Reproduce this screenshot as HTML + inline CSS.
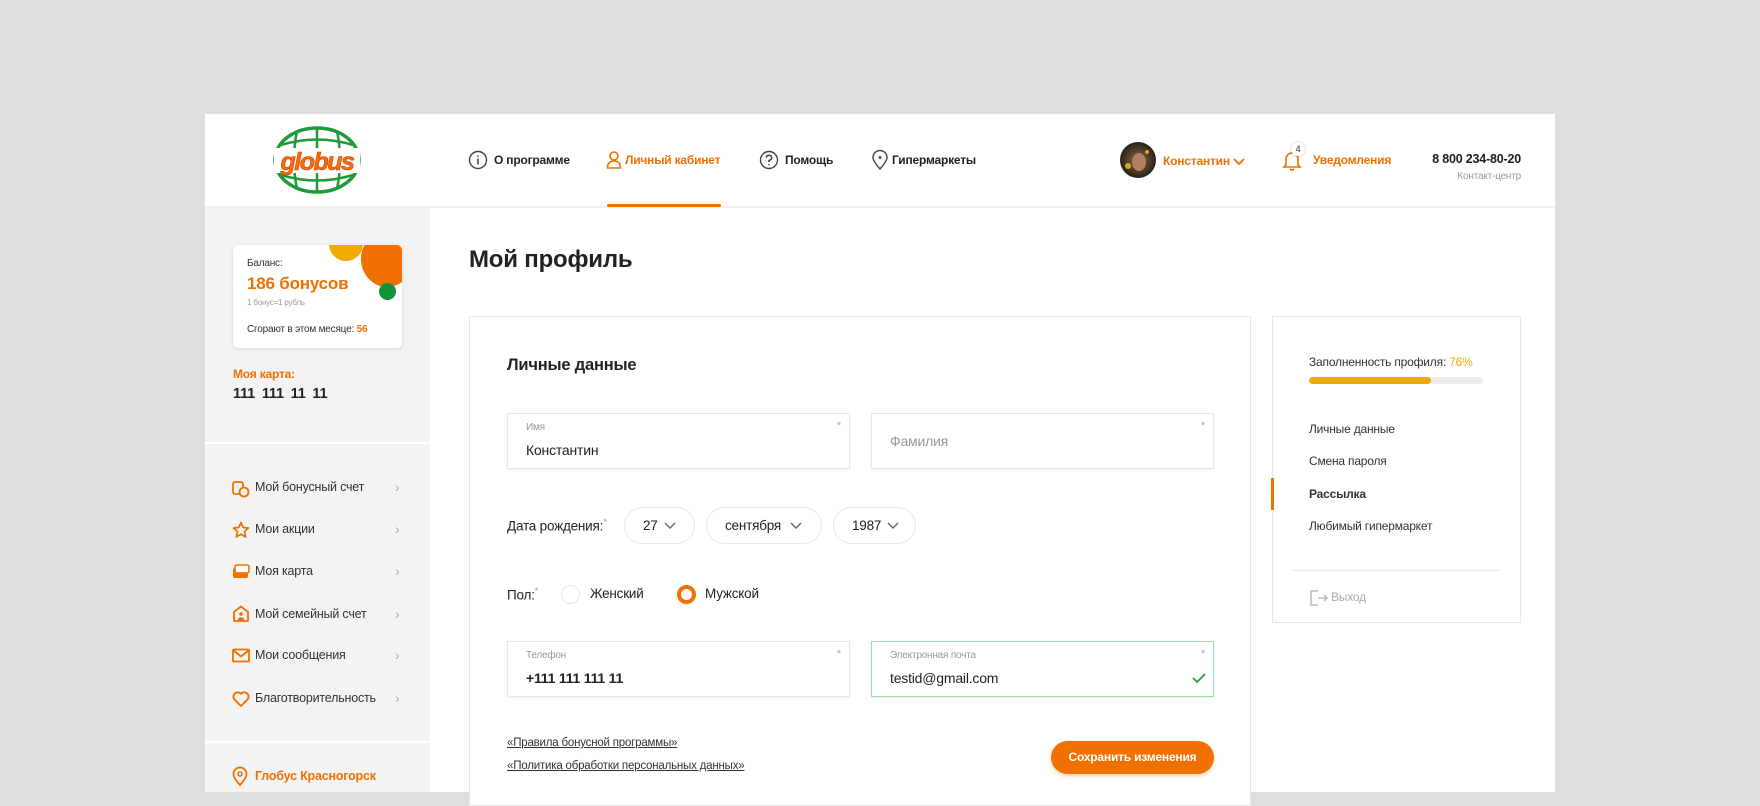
<!DOCTYPE html>
<html><head><meta charset="utf-8">
<style>
*{margin:0;padding:0;box-sizing:border-box}
body{width:1760px;height:792px;background:#dedede;position:relative;overflow:hidden;font-family:"Liberation Sans",sans-serif;color:#222;letter-spacing:-0.2px}
.a{position:absolute;white-space:nowrap}
.or{color:#f07000}
.b{font-weight:bold}
svg{position:absolute;overflow:visible}
.inp{position:absolute;background:#fff;border:1px solid #e6e6e6;box-shadow:0 1px 3px rgba(0,0,0,.06)}
.lbl{position:absolute;left:18px;top:8px;font-size:10px;color:#999}
.val{position:absolute;left:18px;top:28px;font-size:14px;color:#222}
.star{position:absolute;right:8px;top:6px;font-size:11px;color:#aaa}
.pill{position:absolute;top:507px;height:37px;border:1px solid #e8e8e8;border-radius:19px;background:#fff;font-size:13.5px;padding:10px 0 0 18px}
.mi{position:absolute;left:255px;font-size:12.5px;color:#333}
.ch{position:absolute;left:395px;font-size:14px;color:#aaa}
.ri{position:absolute;left:1309px;font-size:12px;color:#333}
</style></head><body>
<div class="a" style="left:205px;top:114px;width:1350px;height:678px;background:#fff"></div>
<div class="a" style="left:205px;top:206px;width:1350px;height:2px;background:#f0f0f0"></div>
<div class="a" style="left:205px;top:208px;width:225px;height:584px;background:#f3f3f3"></div>

<!-- logo -->
<svg style="left:272px;top:126px" width="90" height="68" viewBox="0 0 90 68">
<ellipse cx="45" cy="34" rx="42" ry="32" fill="#fff" stroke="#1f9a3a" stroke-width="3.5"/>
<path d="M9 19 Q45 8 81 19 M9 49 Q45 60 81 49 M25 5 Q19 34 25 63 M45 2 V66 M65 5 Q71 34 65 63" stroke="#1f9a3a" stroke-width="2.5" fill="none"/>
<rect x="2" y="22" width="86" height="25" fill="#fff"/>
<text x="45" y="44" text-anchor="middle" font-family="Liberation Sans" font-weight="bold" font-style="italic" font-size="25" fill="#f07000" stroke="#d23a10" stroke-width="0.6" letter-spacing="-1.5">globus</text>
</svg>

<!-- nav -->
<svg style="left:468px;top:150px" width="20" height="20"><circle cx="10" cy="10" r="8.5" fill="none" stroke="#444" stroke-width="1.4"/><path d="M10 8.5V14.5M10 5.5V6.8" stroke="#444" stroke-width="1.6"/></svg>
<div class="a b" style="left:494px;top:153px;font-size:12px">О программе</div>
<svg style="left:606px;top:150px" width="16" height="20"><circle cx="8" cy="6" r="4" fill="none" stroke="#f07000" stroke-width="1.6"/><path d="M1.5 18Q1.5 11 8 11T14.5 18Z" fill="none" stroke="#f07000" stroke-width="1.6"/></svg>
<div class="a b or" style="left:625px;top:153px;font-size:12px">Личный кабинет</div>
<div class="a" style="left:607px;top:204px;width:114px;height:3px;background:#f07000;border-radius:2px"></div>
<svg style="left:759px;top:150px" width="20" height="20"><circle cx="10" cy="10" r="8.5" fill="none" stroke="#444" stroke-width="1.4"/><path d="M7.3 7.8Q7.5 5.3 10 5.3T12.7 7.8Q12.7 9.5 10 10.5V12M10 14V15.3" fill="none" stroke="#444" stroke-width="1.5"/></svg>
<div class="a b" style="left:785px;top:153px;font-size:12px">Помощь</div>
<svg style="left:871px;top:149px" width="18" height="22"><path d="M9 20Q2 12 2 8.5A7 7 0 0 1 16 8.5Q16 12 9 20Z" fill="none" stroke="#444" stroke-width="1.4"/><circle cx="9" cy="8.5" r="1.4" fill="#444"/></svg>
<div class="a b" style="left:892px;top:153px;font-size:12px">Гипермаркеты</div>

<!-- user -->
<svg style="left:1120px;top:142px" width="36" height="36"><defs><radialGradient id="g"><stop offset="0" stop-color="#8a6a40"/><stop offset="1" stop-color="#2a2018"/></radialGradient></defs><circle cx="18" cy="18" r="18" fill="url(#g)"/><circle cx="8" cy="24" r="3" fill="#e0a020"/><circle cx="27" cy="10" r="2" fill="#e0a020"/><ellipse cx="19" cy="20" rx="7" ry="9" fill="#b08060"/></svg>
<div class="a b or" style="left:1163px;top:154px;font-size:12px">Константин</div>
<svg style="left:1233px;top:158px" width="12" height="8"><path d="M1 1L6 6L11 1" fill="none" stroke="#f07000" stroke-width="1.8"/></svg>
<svg style="left:1283px;top:150px" width="18" height="22"><path d="M3 15V9A6 6 0 0 1 15 9V15L17 17H1Z M7 19Q9 21 11 19" fill="none" stroke="#f07000" stroke-width="1.6"/></svg>
<div class="a" style="left:1291px;top:142px;width:14px;height:14px;border-radius:7px;background:#fff;box-shadow:0 0 2px rgba(0,0,0,.3);font-size:9px;text-align:center;line-height:14px;color:#333">4</div>
<div class="a b or" style="left:1313px;top:153px;font-size:12px">Уведомления</div>
<div class="a b" style="left:1400px;top:152px;width:121px;text-align:right;font-size:12.5px">8 800 234-80-20</div>
<div class="a" style="left:1400px;top:171px;width:121px;text-align:right;font-size:10px;color:#999">Контакт-центр</div>

<!-- balance card -->
<div class="a" style="left:233px;top:245px;width:169px;height:103px;background:#fff;border-radius:5px;box-shadow:0 1px 4px rgba(0,0,0,.12);overflow:hidden">
<div class="a" style="left:96px;top:-18px;width:34px;height:34px;border-radius:50%;background:#f2a900"></div>
<div class="a" style="left:128px;top:-14px;width:52px;height:56px;border-radius:50%;background:#f07000"></div>
<div class="a" style="left:146px;top:38px;width:17px;height:17px;border-radius:50%;background:#12923a"></div>
</div>
<div class="a" style="left:247px;top:258px;font-size:10px;color:#333">Баланс:</div>
<div class="a b or" style="left:247px;top:274px;font-size:17px">186 бонусов</div>
<div class="a" style="left:247px;top:298px;font-size:8px;color:#999">1 бонус=1 рубль</div>
<div class="a" style="left:247px;top:324px;font-size:10px;color:#333">Сгорают в этом месяце: <b class="or">56</b></div>
<div class="a b or" style="left:233px;top:367px;font-size:12px">Моя карта:</div>
<div class="a b" style="left:233px;top:386px;font-size:14.5px;word-spacing:3px">111 111 11 11</div>
<div class="a" style="left:205px;top:442px;width:225px;height:2px;background:#fff"></div>

<!-- menu -->
<svg style="left:232px;top:480px" width="18" height="18"><rect x="1" y="2" width="10" height="12" rx="2" fill="none" stroke="#f07000" stroke-width="1.8"/><circle cx="12" cy="12" r="4.5" fill="#f3f3f3" stroke="#f07000" stroke-width="1.8"/></svg>
<div class="mi" style="top:480px">Мой бонусный счет</div><div class="ch" style="top:479px">›</div>
<svg style="left:232px;top:521px" width="18" height="18"><path d="M9 1.5L11.2 6.5L16.5 7L12.5 10.5L13.7 16L9 13.2L4.3 16L5.5 10.5L1.5 7L6.8 6.5Z" fill="none" stroke="#f07000" stroke-width="1.7" stroke-linejoin="round"/></svg>
<div class="mi" style="top:522px">Мои акции</div><div class="ch" style="top:521px">›</div>
<svg style="left:232px;top:564px" width="18" height="16"><rect x="1" y="4" width="15" height="10" rx="2" fill="#f07000"/><rect x="3" y="1" width="14" height="8" rx="2" fill="#fff" stroke="#f07000" stroke-width="1.6"/></svg>
<div class="mi" style="top:564px">Моя карта</div><div class="ch" style="top:563px">›</div>
<svg style="left:232px;top:605px" width="18" height="18"><path d="M2 16V7L9 1.5L16 7V16Z" fill="none" stroke="#f07000" stroke-width="1.8" stroke-linejoin="round"/><circle cx="9" cy="9" r="1.8" fill="#f07000"/><path d="M6 16V13.5Q9 11 12 13.5V16" fill="#f07000"/></svg>
<div class="mi" style="top:607px">Мой семейный счет</div><div class="ch" style="top:606px">›</div>
<svg style="left:232px;top:648px" width="18" height="16"><rect x="1" y="1.5" width="16" height="12" rx="1" fill="none" stroke="#f07000" stroke-width="1.8"/><path d="M1.5 2.5L9 8.5L16.5 2.5" fill="none" stroke="#f07000" stroke-width="1.8"/></svg>
<div class="mi" style="top:648px">Мои сообщения</div><div class="ch" style="top:647px">›</div>
<svg style="left:232px;top:690px" width="18" height="18"><path d="M9 16L2.5 9.5A4 4 0 0 1 9 3.8A4 4 0 0 1 15.5 9.5Z" fill="none" stroke="#f07000" stroke-width="1.9" stroke-linejoin="round"/></svg>
<div class="mi" style="top:691px">Благотворительность</div><div class="ch" style="top:690px">›</div>
<div class="a" style="left:205px;top:741px;width:225px;height:2px;background:#fff"></div>
<svg style="left:232px;top:766px" width="16" height="20"><path d="M8 19Q1.5 12 1.5 8A6.5 6.5 0 0 1 14.5 8Q14.5 12 8 19Z" fill="none" stroke="#f07000" stroke-width="1.8"/><circle cx="8" cy="8" r="2" fill="none" stroke="#f07000" stroke-width="1.6"/></svg>
<div class="a b or" style="left:255px;top:769px;font-size:12.5px">Глобус Красногорск</div>

<!-- main -->
<div class="a b" style="left:469px;top:246px;font-size:24px;color:#222">Мой профиль</div>
<div class="a" style="left:469px;top:316px;width:782px;height:490px;border:1px solid #e8e8e8;background:#fff"></div>
<div class="a b" style="left:507px;top:356px;font-size:16.5px">Личные данные</div>

<div class="inp" style="left:507px;top:413px;width:343px;height:56px"><div class="lbl">Имя</div><div class="val">Константин</div><div class="star">*</div></div>
<div class="inp" style="left:871px;top:413px;width:343px;height:56px"><div class="val" style="top:19px;color:#999">Фамилия</div><div class="star">*</div></div>

<div class="a" style="left:507px;top:517px;font-size:13.5px">Дата рождения:<sup style="font-size:9px;color:#999">*</sup></div>
<div class="pill" style="left:624px;width:71px">27</div>
<div class="pill" style="left:706px;width:116px">сентября</div>
<div class="pill" style="left:833px;width:83px">1987</div>
<svg style="left:664px;top:522px" width="12" height="8"><path d="M1 1L6 6L11 1" fill="none" stroke="#666" stroke-width="1.4"/></svg>
<svg style="left:790px;top:522px" width="12" height="8"><path d="M1 1L6 6L11 1" fill="none" stroke="#666" stroke-width="1.4"/></svg>
<svg style="left:887px;top:522px" width="12" height="8"><path d="M1 1L6 6L11 1" fill="none" stroke="#666" stroke-width="1.4"/></svg>

<div class="a" style="left:507px;top:586px;font-size:13.5px">Пол:<sup style="font-size:9px;color:#999">*</sup></div>
<div class="a" style="left:561px;top:585px;width:19px;height:19px;border-radius:50%;border:1px solid #e6e6e6;background:#fff"></div>
<div class="a" style="left:590px;top:586px;font-size:13.5px">Женский</div>
<div class="a" style="left:677px;top:585px;width:19px;height:19px;border-radius:50%;border:4px solid #f07000;background:#fff"></div>
<div class="a" style="left:705px;top:586px;font-size:13.5px">Мужской</div>

<div class="inp" style="left:507px;top:641px;width:343px;height:56px"><div class="lbl">Телефон</div><div class="val" style="font-weight:bold">+111 111 111 11</div><div class="star">*</div></div>
<div class="inp" style="left:871px;top:641px;width:343px;height:56px;border-color:#9fdcae"><div class="lbl">Электронная почта</div><div class="val" style="font-size:14px">testid@gmail.com</div><div class="star">*</div>
<svg style="left:320px;top:31px" width="14" height="10"><path d="M1 5L5 9L13 1" fill="none" stroke="#2a9a4a" stroke-width="1.8"/></svg></div>

<div class="a" style="left:507px;top:737px;font-size:11.5px;text-decoration:underline;color:#333">«Правила бонусной программы»</div>
<div class="a" style="left:507px;top:760px;font-size:11.5px;text-decoration:underline;color:#333">«Политика обработки персональных данных»</div>
<div class="a b" style="left:1051px;top:741px;width:163px;height:33px;border-radius:17px;background:#f07000;color:#fff;font-size:12px;text-align:center;line-height:33px;box-shadow:0 2px 4px rgba(240,112,0,.3)">Сохранить изменения</div>

<!-- right card -->
<div class="a" style="left:1272px;top:316px;width:249px;height:307px;border:1px solid #e8e8e8;background:#fff"></div>
<div class="ri" style="top:355px">Заполненность профиля: <span style="color:#f2a900">76%</span></div>
<div class="a" style="left:1309px;top:377px;width:174px;height:7px;border-radius:4px;background:#ececec"></div>
<div class="a" style="left:1309px;top:377px;width:122px;height:7px;border-radius:4px;background:#f2a900"></div>
<div class="ri" style="top:422px">Личные данные</div>
<div class="ri" style="top:454px">Смена пароля</div>
<div class="ri b or" style="top:487px">Рассылка</div>
<div class="a" style="left:1271px;top:478px;width:3px;height:32px;background:#f07000"></div>
<div class="ri" style="top:519px">Любимый гипермаркет</div>
<div class="a" style="left:1291px;top:570px;width:210px;height:1px;background:#ebebeb"></div>
<svg style="left:1309px;top:589px" width="20" height="18"><path d="M9 2H2V16H9M9 9H18M15 6L18 9L15 12" fill="none" stroke="#bbb" stroke-width="1.5"/></svg>
<div class="ri" style="left:1331px;top:590px;color:#aaa">Выход</div>
</body></html>
